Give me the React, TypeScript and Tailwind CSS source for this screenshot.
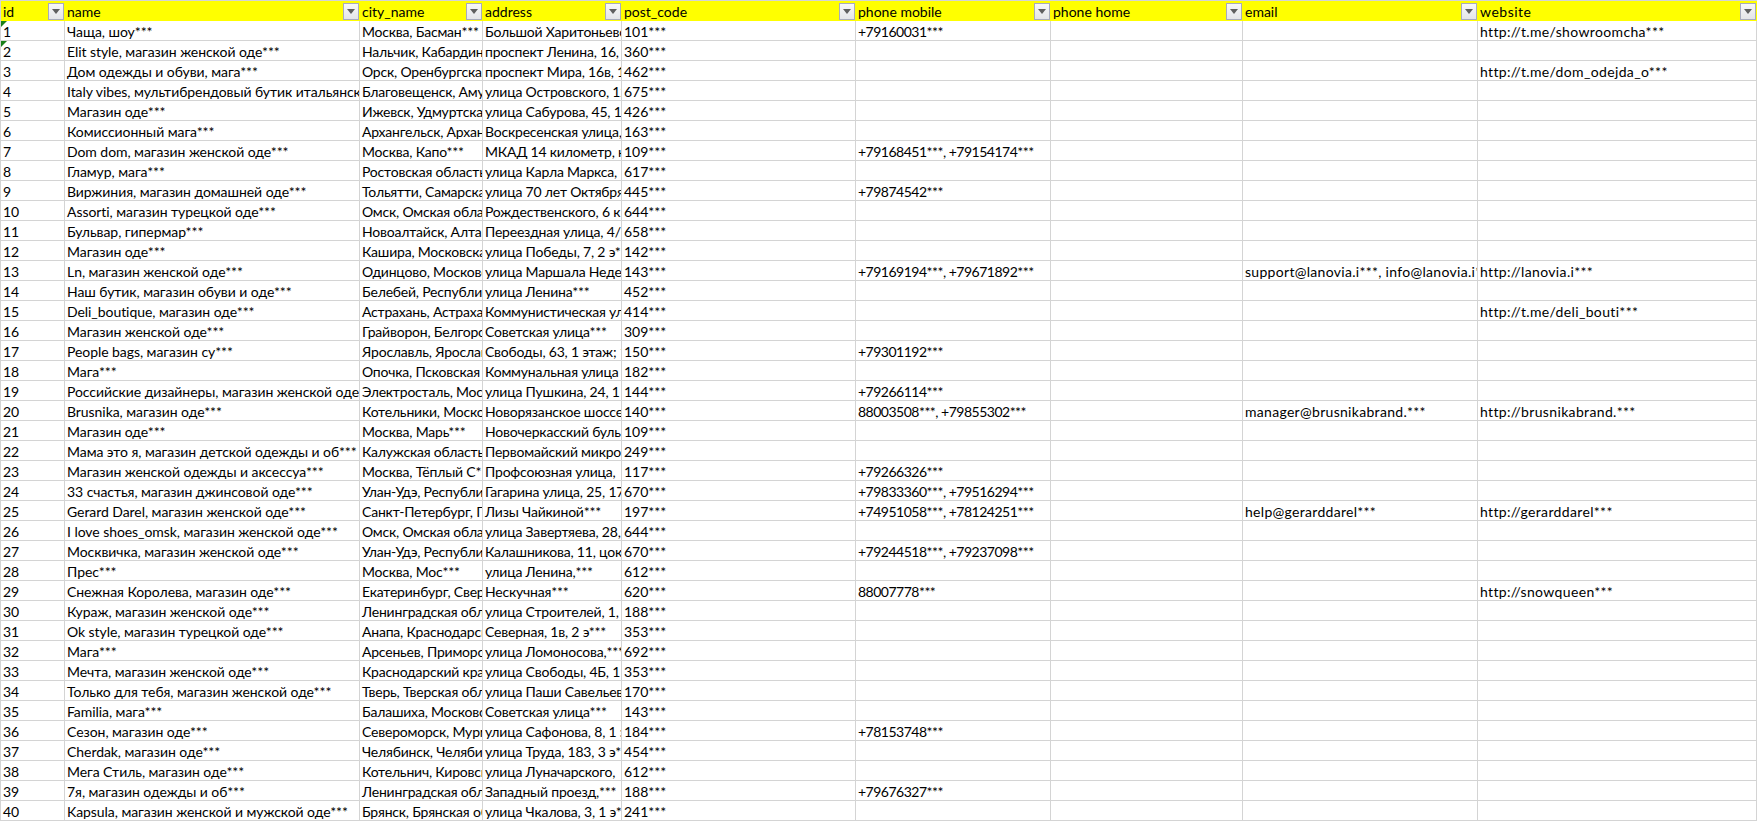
const columns = ['id', 'name', 'city_name', 'address', 'post_code', 'phone mobile', 'phone home', 'email', 'website'];

// name, city, address, post code, mobile, email, website
const rows: string[][] = [
  ['Чаща, шоу***', 'Москва, Басман***', 'Большой Харитоньевский', '101***', '+79160031***', '', 'http://t.me/showroomcha***'],
  ['Elit style, магазин женской оде***', 'Нальчик, Кабардино', 'проспект Ленина, 16, 1', '360***', '', '', ''],
  ['Дом одежды и обуви, мага***', 'Орск, Оренбургская', 'проспект Мира, 16в, 1 этаж', '462***', '', '', 'http://t.me/dom_odejda_o***'],
  ['Italy vibes, мультибрендовый бутик итальянской', 'Благовещенск, Амурская', 'улица Островского, 12', '675***', '', '', ''],
  ['Магазин оде***', 'Ижевск, Удмуртская', 'улица Сабурова, 45, 1', '426***', '', '', ''],
  ['Комиссионный мага***', 'Архангельск, Архангельская', 'Воскресенская улица, 1', '163***', '', '', ''],
  ['Dom dom, магазин женской оде***', 'Москва, Капо***', 'МКАД 14 километр, к', '109***', '+79168451***, +79154174***', '', ''],
  ['Гламур, мага***', 'Ростовская область', 'улица Карла Маркса, 1', '617***', '', '', ''],
  ['Виржиния, магазин домашней оде***', 'Тольятти, Самарская', 'улица 70 лет Октября', '445***', '+79874542***', '', ''],
  ['Assorti, магазин турецкой оде***', 'Омск, Омская область', 'Рождественского, 6 к', '644***', '', '', ''],
  ['Бульвар, гипермар***', 'Новоалтайск, Алтайский', 'Переездная улица, 4/1', '658***', '', '', ''],
  ['Магазин оде***', 'Кашира, Московская', 'улица Победы, 7, 2 э***', '142***', '', '', ''],
  ['Ln, магазин женской оде***', 'Одинцово, Московская', 'улица Маршала Неделина', '143***', '+79169194***, +79671892***', 'support@lanovia.i***, info@lanovia.i***', 'http://lanovia.i***'],
  ['Наш бутик, магазин обуви и оде***', 'Белебей, Республика', 'улица Ленина***', '452***', '', '', ''],
  ['Deli_boutique, магазин оде***', 'Астрахань, Астраханская', 'Коммунистическая улица', '414***', '', '', 'http://t.me/deli_bouti***'],
  ['Магазин женской оде***', 'Грайворон, Белгородская', 'Советская улица***', '309***', '', '', ''],
  ['People bags, магазин су***', 'Ярославль, Ярославская', 'Свободы, 63, 1 этаж; 1', '150***', '+79301192***', '', ''],
  ['Мага***', 'Опочка, Псковская', 'Коммунальная улица', '182***', '', '', ''],
  ['Российские дизайнеры, магазин женской оде***', 'Электросталь, Московская', 'улица Пушкина, 24, 1', '144***', '+79266114***', '', ''],
  ['Brusnika, магазин оде***', 'Котельники, Московская', 'Новорязанское шоссе', '140***', '88003508***, +79855302***', 'manager@brusnikabrand.***', 'http://brusnikabrand.***'],
  ['Магазин оде***', 'Москва, Марь***', 'Новочеркасский бульвар', '109***', '', '', ''],
  ['Мама это я, магазин детской одежды и об***', 'Калужская область', 'Первомайский микрорайон', '249***', '', '', ''],
  ['Магазин женской одежды и аксессуа***', 'Москва, Тёплый С***', 'Профсоюзная улица,', '117***', '+79266326***', '', ''],
  ['33 счастья, магазин джинсовой оде***', 'Улан-Удэ, Республика', 'Гагарина улица, 25, 17', '670***', '+79833360***, +79516294***', '', ''],
  ['Gerard Darel, магазин женской оде***', 'Санкт-Петербург, Г', 'Лизы Чайкиной***', '197***', '+74951058***, +78124251***', 'help@gerarddarel***', 'http://gerarddarel***'],
  ['I love shoes_omsk, магазин женской оде***', 'Омск, Омская область', 'улица Завертяева, 28,', '644***', '', '', ''],
  ['Москвичка, магазин женской оде***', 'Улан-Удэ, Республика', 'Калашникова, 11, цоколь', '670***', '+79244518***, +79237098***', '', ''],
  ['Прес***', 'Москва, Мос***', 'улица Ленина,***', '612***', '', '', ''],
  ['Снежная Королева, магазин оде***', 'Екатеринбург, Свердловская', 'Нескучная***', '620***', '88007778***', '', 'http://snowqueen***'],
  ['Кураж, магазин женской оде***', 'Ленинградская область', 'улица Строителей, 1,', '188***', '', '', ''],
  ['Ok style, магазин турецкой оде***', 'Анапа, Краснодарский', 'Северная, 1в, 2 э***', '353***', '', '', ''],
  ['Мага***', 'Арсеньев, Приморский', 'улица Ломоносова,***', '692***', '', '', ''],
  ['Мечта, магазин женской оде***', 'Краснодарский край', 'улица Свободы, 4Б, 1', '353***', '', '', ''],
  ['Только для тебя, магазин женской оде***', 'Тверь, Тверская область', 'улица Паши Савельевой', '170***', '', '', ''],
  ['Familia, мага***', 'Балашиха, Московская', 'Советская улица***', '143***', '', '', ''],
  ['Сезон, магазин оде***', 'Североморск, Мурманская', 'улица Сафонова, 8, 1 э', '184***', '+78153748***', '', ''],
  ['Cherdak, магазин оде***', 'Челябинск, Челябинская', 'улица Труда, 183, 3 э***', '454***', '', '', ''],
  ['Мега Стиль, магазин оде***', 'Котельнич, Кировская', 'улица Луначарского,', '612***', '', '', ''],
  ['7я, магазин одежды и об***', 'Ленинградская область', 'Западный проезд,***', '188***', '+79676327***', '', ''],
  ['Kapsula, магазин женской и мужской оде***', 'Брянск, Брянская область', 'улица Чкалова, 3, 1 э***', '241***', '', '', ''],
];

const gridCols = 'grid grid-cols-[64px_295px_123px_139px_234px_195px_192px_235px_279px]';

// digits and latin run a bit off Calibri's widths, nudged per column
const colTracking = ['', 'tracking-[-0.06px]', 'tracking-[-0.2px]', 'tracking-[-0.2px]', '', 'tracking-[-0.5px]', '', 'tracking-[0.3px]', 'tracking-[0.35px]'];

const FilterButton = () => (
  <span className="flex h-[17px] w-4 shrink-0 items-center justify-center border border-[#a7abbd] bg-gradient-to-b from-[#f8f8f8] to-[#e4e5e8]">
    <svg width="8" height="5" viewBox="0 0 8 5">
      <path d="M0 0h8L4 5z" fill="#5f5f5f" />
    </svg>
  </span>
);

const Cell = ({ text, corner, tracking }: { text: string; corner?: boolean; tracking: string }) => (
  <div className={`relative h-5 overflow-hidden whitespace-nowrap border-r border-b border-[#d4d4d4] pl-[2px] leading-[21px] ${tracking}`}>
    {corner && (
      <svg className="absolute left-0 top-0" width="6" height="6" viewBox="0 0 6 6">
        <path d="M0 0h6L0 6z" fill="#1a7f1a" />
      </svg>
    )}
    {text}
  </div>
);

export default function App() {
  return (
    <div className="w-[1757px] border-t border-l border-[#d4d4d4] bg-white font-['Lato','Liberation_Sans',sans-serif] text-[14px] text-black">
      <div className={`${gridCols} h-5 bg-[#ffff00]`}>
        {columns.map((col) => (
          <div key={col} className="flex items-center justify-between pl-[2px] pr-[1px]">
            <span className={col === 'website' ? 'tracking-[0.5px]' : ''}>{col}</span>
            <FilterButton />
          </div>
        ))}
      </div>
      {rows.map((row, i) => {
        const [name, city, address, post, mobile, email, site] = row;
        const cells = [String(i + 1), name, city, address, post, mobile, '', email, site];
        return (
          <div key={i} className={gridCols}>
            {cells.map((text, j) => (
              <Cell key={j} text={text} tracking={colTracking[j]} corner={j === 0 && i < 2} />
            ))}
          </div>
        );
      })}
    </div>
  );
}
